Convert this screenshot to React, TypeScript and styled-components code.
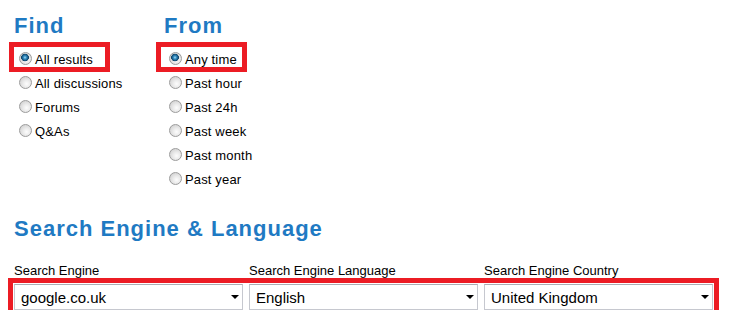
import React from "react";
import styled, { createGlobalStyle } from "styled-components";

const Global = createGlobalStyle`
  html, body { margin: 0; padding: 0; background: #fff; }
  body { font-family: "Liberation Sans", Arial, sans-serif; color: #000; }
`;

const RED = "#ec1c24";
const BLUE = "#1f7ac3";

const Page = styled.div`
  box-sizing: border-box;
  width: 729px;
  padding: 13px 0 0 14px;
`;

const Filters = styled.div`
  display: flex;
`;

const Group = styled.div<{ $w?: number }>`
  display: flex;
  flex-direction: column;
  width: ${(p) => (p.$w ? `${p.$w}px` : "auto")};
`;

const Heading = styled.h2<{ $top?: number; $bottom?: number }>`
  margin: ${(p) => p.$top ?? 0}px 0 ${(p) => p.$bottom ?? 8}px 0;
  font-family: "Liberation Sans", Arial, sans-serif;
  font-size: 22px;
  line-height: 26px;
  font-weight: bold;
  letter-spacing: 1px;
  color: ${BLUE};
`;

type Box = { l: number; r: number };

const Option = styled.label<{ $box?: Box }>`
  position: relative;
  display: flex;
  align-items: center;
  width: fit-content;
  height: 24px;
  padding-left: 5px;
  font-size: 13px;
  letter-spacing: 0.15px;
  cursor: default;
  &::before {
    content: "";
    display: ${(p) => (p.$box ? "block" : "none")};
    position: absolute;
    box-sizing: border-box;
    top: -5px;
    bottom: -1px;
    left: ${(p) => (p.$box ? -p.$box.l : 0)}px;
    right: ${(p) => (p.$box ? -p.$box.r : 0)}px;
    border: 5px solid ${RED};
    pointer-events: none;
  }
`;

const Radio = styled.input.attrs({ type: "radio" })`
  appearance: none;
  -webkit-appearance: none;
  box-sizing: border-box;
  width: 13px;
  height: 13px;
  margin: 0 3px 2px 0;
  border-radius: 50%;
  border: 1px solid #9c9c9c;
  background: radial-gradient(circle at 60% 62%, #fdfdfd 0, #ececec 35%, #d2d2d2 80%, #c4c4c4 100%);
  flex: none;
  &:checked {
    background:
      radial-gradient(circle at 5px 4.5px, #a9e0f5 0, #3b94c9 1.4px, #1a5f8c 2.8px, #0e4165 3.6px, rgba(14, 65, 101, 0) 4.1px),
      radial-gradient(circle at 60% 62%, #fdfdfd 0, #ececec 35%, #d2d2d2 80%, #c4c4c4 100%);
  }
`;

const Cols = styled.div`
  display: grid;
  grid-template-columns: repeat(3, 229px);
  column-gap: 6px;
`;

const Labels = styled(Cols)`
  margin-bottom: 5px;
  font-size: 13px;
  line-height: 16px;
`;

const Selects = styled(Cols)`
  outline: 5px solid ${RED};
  outline-offset: 1px;
  width: fit-content;
`;

const SelectBox = styled.div`
  position: relative;
  &::after {
    content: "";
    position: absolute;
    right: 4px;
    top: 11px;
    border-left: 4px solid transparent;
    border-right: 4px solid transparent;
    border-top: 4px solid #000;
    pointer-events: none;
  }
`;

const Select = styled.select`
  appearance: none;
  -webkit-appearance: none;
  box-sizing: border-box;
  display: block;
  width: 100%;
  height: 26px;
  margin: 0;
  padding: 0 18px 0 6px;
  border: 1px solid #c6c8cf;
  border-top-color: #abadb3;
  border-radius: 0;
  background: #fff;
  color: #000;
  font-family: "Liberation Sans", Arial, sans-serif;
  font-size: 15px;
  outline: none;
`;

const findOptions = ["All results", "All discussions", "Forums", "Q&As"];
const fromOptions = ["Any time", "Past hour", "Past 24h", "Past week", "Past month", "Past year"];

export default function App() {
  return (
    <>
      <Global />
      <Page>
        <Filters>
          <Group $w={150} role="radiogroup">
            <Heading>Find</Heading>
            {findOptions.map((o, i) => (
              <Option key={o} $box={i === 0 ? { l: 5, r: 17 } : undefined}>
                <Radio name="find" defaultChecked={i === 0} />
                {o}
              </Option>
            ))}
          </Group>
          <Group role="radiogroup">
            <Heading>From</Heading>
            {fromOptions.map((o, i) => (
              <Option key={o} $box={i === 0 ? { l: 8, r: 10 } : undefined}>
                <Radio name="from" defaultChecked={i === 0} />
                {o}
              </Option>
            ))}
          </Group>
        </Filters>
        <Heading $top={25} $bottom={21}>Search Engine &amp; Language</Heading>
        <Labels>
          <span>Search Engine</span>
          <span>Search Engine Language</span>
          <span>Search Engine Country</span>
        </Labels>
        <Selects>
          <SelectBox>
            <Select defaultValue="google.co.uk" aria-label="Search Engine">
              <option>google.co.uk</option>
              <option>google.com</option>
            </Select>
          </SelectBox>
          <SelectBox>
            <Select defaultValue="English" aria-label="Search Engine Language">
              <option>English</option>
              <option>French</option>
            </Select>
          </SelectBox>
          <SelectBox>
            <Select defaultValue="United Kingdom" aria-label="Search Engine Country">
              <option>United Kingdom</option>
              <option>United States</option>
            </Select>
          </SelectBox>
        </Selects>
      </Page>
    </>
  );
}
